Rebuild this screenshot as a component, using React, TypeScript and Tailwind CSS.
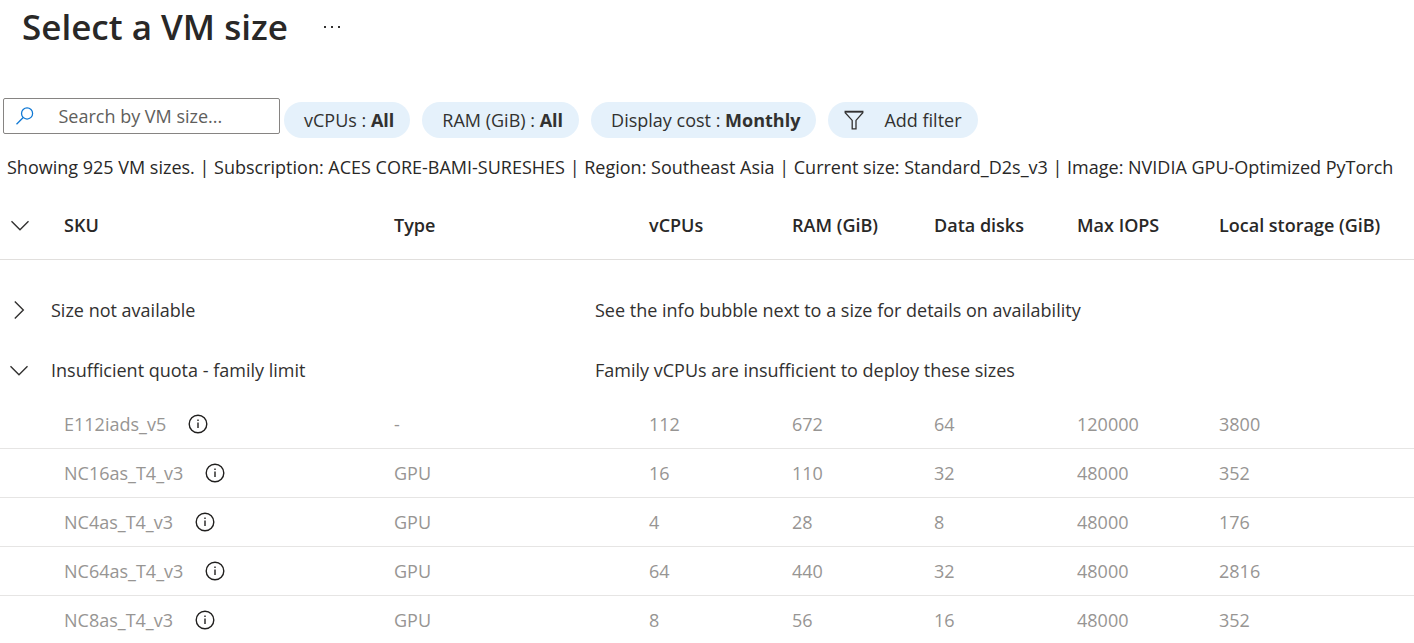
import { useState } from 'react';

type VmSize = {
  sku: string;
  type: string;
  vcpus: number;
  ram: number;
  disks: number;
  iops: number;
  storage: number;
};

const sizes: VmSize[] = [
  { sku: 'E112iads_v5', type: '-', vcpus: 112, ram: 672, disks: 64, iops: 120000, storage: 3800 },
  { sku: 'NC16as_T4_v3', type: 'GPU', vcpus: 16, ram: 110, disks: 32, iops: 48000, storage: 352 },
  { sku: 'NC4as_T4_v3', type: 'GPU', vcpus: 4, ram: 28, disks: 8, iops: 48000, storage: 176 },
  { sku: 'NC64as_T4_v3', type: 'GPU', vcpus: 64, ram: 440, disks: 32, iops: 48000, storage: 2816 },
  { sku: 'NC8as_T4_v3', type: 'GPU', vcpus: 8, ram: 56, disks: 16, iops: 48000, storage: 352 },
];

const filters = [
  { label: 'vCPUs', value: 'All' },
  { label: 'RAM (GiB)', value: 'All' },
  { label: 'Display cost', value: 'Monthly' },
];

function Chevron({ open }: { open: boolean }) {
  return (
    <svg width="20" height="20" viewBox="0 0 20 20" fill="none" stroke="#323130" strokeWidth="1.4" aria-hidden="true">
      {open ? <path d="M1.5 6.3 10 14.8 18.5 6.3" /> : <path d="M5.8 1.5 14.3 10 5.8 18.5" />}
    </svg>
  );
}

function SearchIcon() {
  return (
    <svg width="22" height="22" viewBox="0 0 22 22" fill="none" stroke="#0f78d4" strokeWidth="1.5" aria-hidden="true">
      <circle cx="13.2" cy="8" r="6.6" />
      <path d="M8.6 12.8 0.6 20.8" />
    </svg>
  );
}

function FilterIcon() {
  return (
    <svg width="20" height="20" viewBox="0 0 20 20" fill="none" stroke="#323130" strokeWidth="1.3" aria-hidden="true">
      <path d="M1.2 1.4H18.8V2.8L12 10.4V18.8H8.2V10.4L1.2 2.8Z" />
      <path d="M1.2 2H18.8" />
    </svg>
  );
}

function InfoIcon() {
  return (
    <svg width="20" height="20" viewBox="0 0 20 20" fill="none" stroke="#201f1e" strokeWidth="1.4" aria-hidden="true">
      <circle cx="10" cy="10" r="8.8" />
      <path d="M10 8.4V14" />
      <path d="M10 5.6V7" />
    </svg>
  );
}

type GroupProps = { title: string; message: string; open: boolean; onToggle: () => void };

function GroupRow({ title, message, open, onToggle }: GroupProps) {
  return (
    <tr className="h-[60px] text-[#323130]">
      <td className="pl-[9px]">
        <button type="button" aria-label={title} aria-expanded={open} onClick={onToggle} className="block">
          <Chevron open={open} />
        </button>
      </td>
      <td colSpan={2}>{title}</td>
      <td colSpan={6}>{message}</td>
    </tr>
  );
}

export default function App() {
  const [allOpen, setAllOpen] = useState(true);
  const [unavailableOpen, setUnavailableOpen] = useState(false);
  const [quotaOpen, setQuotaOpen] = useState(true);

  return (
    <main className="overflow-hidden bg-white font-['Open_Sans','Noto_Sans',sans-serif] text-[18px] leading-6 text-[#292827]">
      <header className="flex h-[54px] items-center gap-9 pl-[22px]">
        <h1 className="text-[35px] leading-[52px] font-semibold">Select a VM size</h1>
        <button type="button" aria-label="More actions" className="flex gap-[5px]">
          <span className="size-[2px] bg-[#323130]" />
          <span className="size-[2px] bg-[#323130]" />
          <span className="size-[2px] bg-[#323130]" />
        </button>
      </header>

      <div className="mt-11 flex items-start gap-1 pl-[3px]">
        <label className="flex h-9 w-[277px] items-center gap-6 rounded-[2px] border border-[#868482] pl-3">
          <SearchIcon />
          <input
            type="text"
            aria-label="Search by VM size"
            placeholder="Search by VM size..."
            className="w-full min-w-0 bg-transparent outline-none placeholder:text-[#605e5c]"
          />
        </label>
        <div className="mt-1 flex gap-3 text-[#323130]">
          {filters.map((f) => (
            <button key={f.label} type="button" className="h-9 rounded-full bg-[#e5f1fb] pr-4 pl-5 whitespace-nowrap">
              {f.label} : <strong className="font-bold">{f.value}</strong>
            </button>
          ))}
          <button type="button" className="flex h-9 items-center gap-5 rounded-full bg-[#e5f1fb] px-4 whitespace-nowrap">
            <FilterIcon />
            Add filter
          </button>
        </div>
      </div>

      <p className="mt-[17px] pl-[7px] whitespace-nowrap">
        Showing 925 VM sizes. | Subscription: ACES CORE-BAMI-SURESHES | Region: Southeast Asia | Current size:
        Standard_D2s_v3 | Image: NVIDIA GPU-Optimized PyTorch
      </p>

      <table className="mt-3 w-full table-fixed border-collapse text-left whitespace-nowrap">
        <colgroup>
          <col className="w-[51px]" />
          <col className="w-[343px]" />
          <col className="w-[201px]" />
          <col className="w-[54px]" />
          <col className="w-[143px]" />
          <col className="w-[142px]" />
          <col className="w-[143px]" />
          <col className="w-[142px]" />
          <col />
        </colgroup>
        <thead>
          <tr className="h-[68px] border-b border-[#e1dfdd]">
            <td className="pl-[10px]">
              <button
                type="button"
                aria-label="All groups"
                aria-expanded={allOpen}
                onClick={() => setAllOpen(!allOpen)}
                className="block"
              >
                <Chevron open={allOpen} />
              </button>
            </td>
            <th className="pl-[13px] font-semibold">SKU</th>
            <th colSpan={2} className="font-semibold">Type</th>
            <th className="font-semibold">vCPUs</th>
            <th className="font-semibold">RAM (GiB)</th>
            <th className="font-semibold">Data disks</th>
            <th className="font-semibold">Max IOPS</th>
            <th className="font-semibold">Local storage (GiB)</th>
          </tr>
        </thead>
        {allOpen && (
          <tbody className="before:block before:h-5">
            <GroupRow
              title="Size not available"
              message="See the info bubble next to a size for details on availability"
              open={unavailableOpen}
              onToggle={() => setUnavailableOpen(!unavailableOpen)}
            />
            <GroupRow
              title="Insufficient quota - family limit"
              message="Family vCPUs are insufficient to deploy these sizes"
              open={quotaOpen}
              onToggle={() => setQuotaOpen(!quotaOpen)}
            />
            {quotaOpen &&
              sizes.map((s) => (
                <tr key={s.sku} className="h-[49px] border-b border-[#e6e5e4] text-[#979593]">
                  <td />
                  <td className="pl-[13px]">
                    <div className="flex items-center gap-[22px]">
                      {s.sku}
                      <button type="button" aria-label={`Details for ${s.sku}`}>
                        <InfoIcon />
                      </button>
                    </div>
                  </td>
                  <td colSpan={2}>{s.type}</td>
                  <td>{s.vcpus}</td>
                  <td>{s.ram}</td>
                  <td>{s.disks}</td>
                  <td>{s.iops}</td>
                  <td>{s.storage}</td>
                </tr>
              ))}
          </tbody>
        )}
      </table>
    </main>
  );
}
